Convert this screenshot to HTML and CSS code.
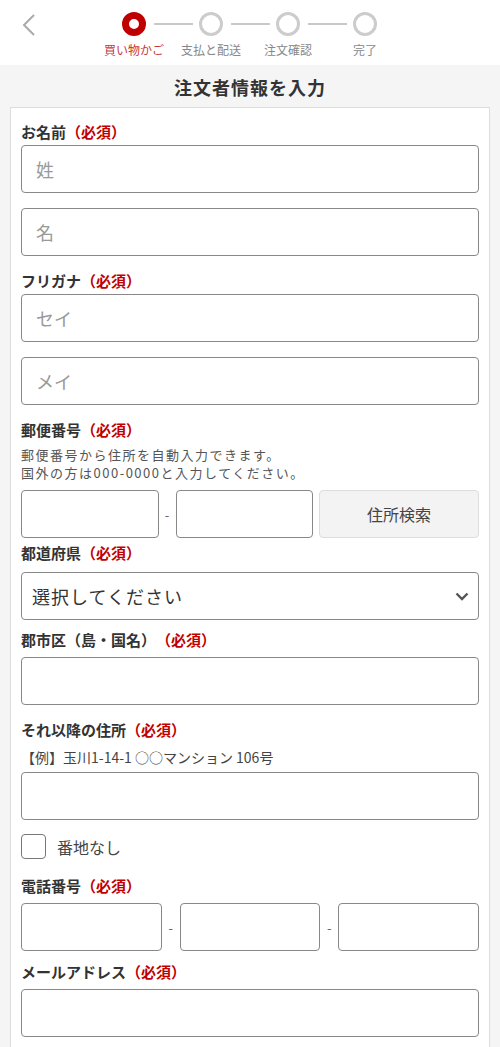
FILE: index.html
```html
<!doctype html>
<html lang="ja">
	<head>
		<title>注文者情報を入力</title>
		<meta charset="utf-8">
		<meta name="viewport" content="width=device-width, initial-scale=1.0">

		<link rel="stylesheet" href="styles.css">
	</head>

<body>

	<!-- header / steps -->

	<div class="header">
		<a class="back" href="#">
			<svg width="14" height="22" viewBox="0 0 14 22"><polyline points="12,1 2,11 12,21" fill="none" stroke="#aaa" stroke-width="2"/></svg>
		</a>
		<div class="steps">
			<div class="step active"><span class="dot"></span><span class="step_label">買い物かご</span></div>
			<span class="line"></span>
			<div class="step"><span class="dot"></span><span class="step_label">支払と配送</span></div>
			<span class="line"></span>
			<div class="step"><span class="dot"></span><span class="step_label">注文確認</span></div>
			<span class="line"></span>
			<div class="step"><span class="dot"></span><span class="step_label">完了</span></div>
		</div>
	</div>

	<div class="main">

		<h1 class="title">注文者情報を入力</h1>

		<form class="panel">

			<div class="field field--first">
				<div class="label label--tight">お名前<span class="req">（必須）</span></div>
				<input class="input" type="text" placeholder="姓">
				<input class="input input--next" type="text" placeholder="名">
			</div>

			<div class="field">
				<div class="label label--tight">フリガナ<span class="req">（必須）</span></div>
				<input class="input" type="text" placeholder="セイ">
				<input class="input input--next" type="text" placeholder="メイ">
			</div>

			<div class="field">
				<div class="label label--tight">郵便番号<span class="req">（必須）</span></div>
				<p class="help">郵便番号から住所を自動入力できます。<br>国外の方は000-0000と入力してください。</p>
				<div class="row">
					<input class="input" type="text">
					<span class="dash">-</span>
					<input class="input" type="text">
					<button class="btn" type="button">住所検索</button>
				</div>
			</div>

			<div class="field field--pref">
				<div class="label label--select">都道府県<span class="req">（必須）</span></div>
				<div class="select_wrap">
					<select class="select">
						<option>選択してください</option>
					</select>
					<svg class="caret" width="14" height="9" viewBox="0 0 14 9"><polyline points="1.5,1.5 7,7 12.5,1.5" fill="none" stroke="#555" stroke-width="2.4"/></svg>
				</div>
			</div>

			<div class="field field--city">
				<div class="label">郡市区（島・国名）　<span class="req">（必須）</span></div>
				<input class="input" type="text">
			</div>

			<div class="field">
				<div class="label">それ以降の住所<span class="req">（必須）</span></div>
				<p class="example">【例】玉川1-14-1 ○○マンション 106号</p>
				<input class="input" type="text">
			</div>

			<label class="check">
				<span class="box"></span>
				<span class="check_text">番地なし</span>
			</label>

			<div class="field field--tel">
				<div class="label">電話番号<span class="req">（必須）</span></div>
				<div class="row">
					<input class="input" type="text">
					<span class="dash dash--tel">-</span>
					<input class="input" type="text">
					<span class="dash dash--tel">-</span>
					<input class="input" type="text">
				</div>
			</div>

			<div class="field field--mail">
				<div class="label">メールアドレス<span class="req">（必須）</span></div>
				<input class="input" type="text">
			</div>

		</form>

	</div>

</body>
</html>
```

FILE: styles.css
```css
* { box-sizing: border-box; }

body { margin: 0; background: #f5f5f5; color: #333; font-family: "Noto Sans CJK JP", "Noto Sans", sans-serif; }

/* header */

.header { display: flex; align-items: flex-start; height: 65px; background: #fff; }
.back { display: block; margin: 14px 0 0 22px; width: 14px; height: 22px; }
.back svg { display: block; }

.steps { display: flex; align-items: flex-start; margin-left: 86px; }
.step { display: flex; flex-direction: column; align-items: center; width: 24px; margin-top: 12px; }
.dot { display: block; width: 24px; height: 24px; border-radius: 50%; border: 3px solid #ccc; background: #fff; }
.step.active .dot { border: 7px solid #c00000; }
.step_label { margin-top: 6px; font-size: 12px; line-height: 16px; white-space: nowrap; color: #888; }
.step.active .step_label { color: #c9383a; }
.line { display: block; width: 39px; height: 2px; margin: 23px 6px 0 8px; background: #c8c8c8; }

/* title */

.main { padding-bottom: 40px; }
.title { margin: 0; padding: 10px 0 8px; text-align: center; font-size: 18px; line-height: 24px; font-weight: 700; letter-spacing: 1px; color: #333; }

/* panel */

.panel { margin: 0 10px; padding: 12px 10px 30px; background: #fff; border: 1px solid #ddd; }

.field { margin-top: 13px; }
.field--first { margin-top: 0; }
.field--pref { margin-top: 3px; }
.field--city { margin-top: 8px; }
.field--tel { margin-top: 15px; }
.field--mail { margin-top: 9px; }

.label { font-size: 15px; line-height: 24px; font-weight: 700; color: #333; margin-bottom: 5px; }
.label--tight { margin-bottom: 1px; }
.label--select { margin-bottom: 7px; }
.req { color: #c00000; }

.input { display: block; width: 100%; height: 48px; padding: 0 14px; border: 1px solid #888; border-radius: 4px; background: #fff; font-family: inherit; font-size: 18px; color: #333; outline: none; }
.input::placeholder { color: #999; }
.input--next { margin-top: 15px; }

.help { margin: 4px 0 8px; font-size: 13px; line-height: 18px; letter-spacing: 1.5px; color: #555; }
.example { margin: 6px 0 6px; font-size: 14px; line-height: 18px; color: #444; }

.row { display: flex; align-items: center; }
.row .input { flex: 1; min-width: 0; }
.dash { width: 17px; text-align: center; font-size: 13px; color: #666; }
.dash--tel { width: 18px; }
.btn { width: 160px; height: 48px; margin-left: 6px; border: 1px solid #ddd; border-radius: 4px; background: #f3f3f3; font-family: inherit; font-size: 16px; color: #444; }

.select_wrap { position: relative; }
.select { display: block; width: 100%; height: 48px; padding: 0 10px; border: 1px solid #888; border-radius: 4px; background: #fff; font-family: inherit; font-size: 18px; letter-spacing: 1px; color: #333; -webkit-appearance: none; appearance: none; outline: none; }
.caret { position: absolute; right: 10px; top: 20px; pointer-events: none; }

.check { display: flex; align-items: center; margin-top: 14px; height: 25px; }
.box { width: 25px; height: 25px; border: 1px solid #777; border-radius: 4px; background: #fff; }
.check_text { margin-left: 11px; font-size: 16px; color: #444; }
```
